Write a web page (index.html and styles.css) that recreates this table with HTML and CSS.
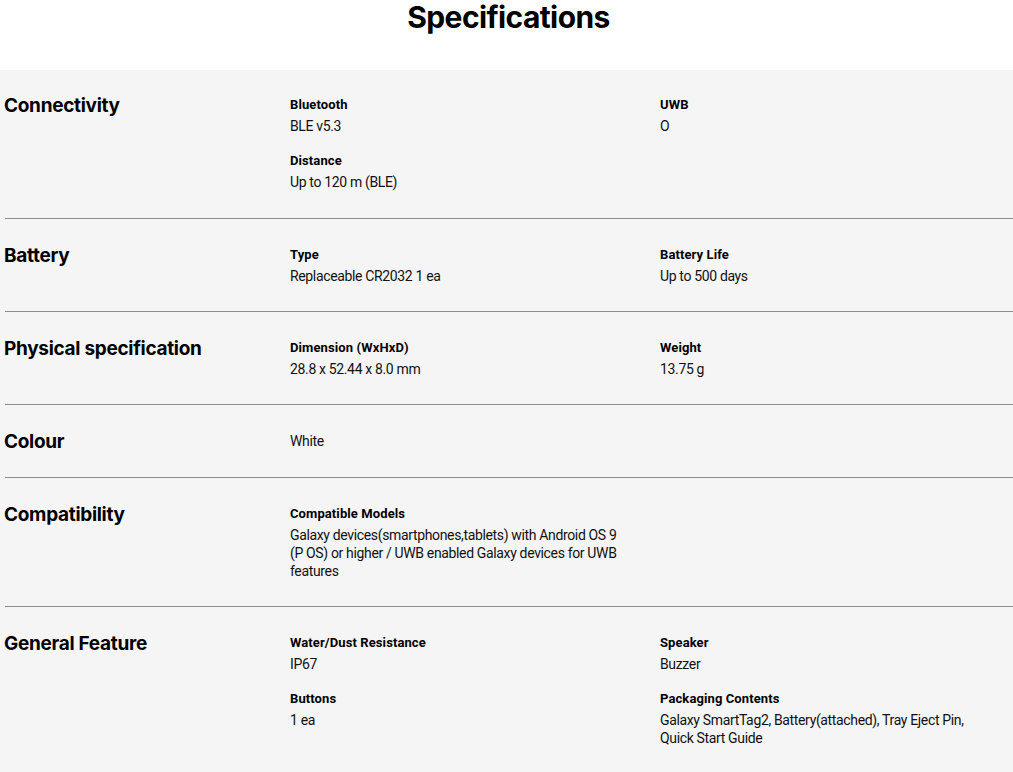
FILE: index.html
```html
<!DOCTYPE html>
<html lang="en">
<head>
<meta charset="utf-8">
<title>Specifications</title>
<link rel="stylesheet" href="styles.css">
</head>
<body>
<h1 class="page-title">Specifications</h1>
<section class="specs">
  <div class="spec-row">
    <h2 class="spec-label">Connectivity</h2>
    <div class="spec-col">
      <div class="spec-item"><div class="item-title">Bluetooth</div><div class="item-value">BLE v5.3</div></div>
      <div class="spec-item"><div class="item-title">Distance</div><div class="item-value">Up to 120 m (BLE)</div></div>
    </div>
    <div class="spec-col">
      <div class="spec-item"><div class="item-title">UWB</div><div class="item-value">O</div></div>
    </div>
  </div>
  <div class="spec-row">
    <h2 class="spec-label">Battery</h2>
    <div class="spec-col">
      <div class="spec-item"><div class="item-title">Type</div><div class="item-value">Replaceable CR2032 1 ea</div></div>
    </div>
    <div class="spec-col">
      <div class="spec-item"><div class="item-title">Battery Life</div><div class="item-value">Up to 500 days</div></div>
    </div>
  </div>
  <div class="spec-row">
    <h2 class="spec-label">Physical specification</h2>
    <div class="spec-col">
      <div class="spec-item"><div class="item-title">Dimension (WxHxD)</div><div class="item-value">28.8 x 52.44 x 8.0 mm</div></div>
    </div>
    <div class="spec-col">
      <div class="spec-item"><div class="item-title">Weight</div><div class="item-value">13.75 g</div></div>
    </div>
  </div>
  <div class="spec-row">
    <h2 class="spec-label">Colour</h2>
    <div class="spec-col">
      <div class="spec-item"><div class="item-value">White</div></div>
    </div>
    <div class="spec-col"></div>
  </div>
  <div class="spec-row">
    <h2 class="spec-label">Compatibility</h2>
    <div class="spec-col">
      <div class="spec-item"><div class="item-title">Compatible Models</div><div class="item-value">Galaxy devices(smartphones,tablets) with Android OS 9 (P OS) or higher / UWB enabled Galaxy devices for UWB features</div></div>
    </div>
    <div class="spec-col"></div>
  </div>
  <div class="spec-row">
    <h2 class="spec-label">General Feature</h2>
    <div class="spec-col">
      <div class="spec-item"><div class="item-title">Water/Dust Resistance</div><div class="item-value">IP67</div></div>
      <div class="spec-item"><div class="item-title">Buttons</div><div class="item-value">1 ea</div></div>
    </div>
    <div class="spec-col">
      <div class="spec-item"><div class="item-title">Speaker</div><div class="item-value">Buzzer</div></div>
      <div class="spec-item"><div class="item-title">Packaging Contents</div><div class="item-value">Galaxy SmartTag2, Battery(attached), Tray Eject Pin, Quick Start Guide</div></div>
    </div>
  </div>
</section>
</body>
</html>
```

FILE: styles.css
```css
html, body {
  margin: 0;
  padding: 0;
  background: #ffffff;
  color: #000000;
}

body {
  font-family: Roboto, "Liberation Sans", sans-serif;
}

.page-title {
  margin: 0;
  height: 70px;
  text-align: center;
  font-family: Inter, "Noto Sans", sans-serif;
  font-weight: 700;
  font-size: 30px;
  line-height: 34px;
  letter-spacing: -0.6px;
  padding-left: 4px;
}

.specs {
  background: #f5f5f5;
  padding-left: 5px;
  padding-bottom: 30px;
}

.spec-row {
  display: grid;
  grid-template-columns: 285px 370px 1fr;
  padding: 27px 0 26px;
  border-top: 1px solid #8e8e8e;
}

.spec-row:first-child {
  border-top: none;
  padding-top: 26px;
  padding-bottom: 27px;
}

.spec-label {
  margin: 0 0 0 -1px;
  font-family: Inter, "Noto Sans", sans-serif;
  font-weight: 700;
  font-size: 19px;
  line-height: 19px;
  letter-spacing: -0.3px;
}

.spec-col {
  display: flex;
  flex-direction: column;
  gap: 17px;
  padding-right: 20px;
}

.spec-col:nth-child(2) {
  max-width: 330px;
}

.item-title {
  font-size: 13px;
  font-weight: 700;
  line-height: 18px;
  margin-bottom: 3px;
  letter-spacing: 0.1px;
}

.item-value {
  font-size: 14px;
  font-weight: 400;
  line-height: 18px;
  letter-spacing: -0.35px;
  color: #111111;
}
```
